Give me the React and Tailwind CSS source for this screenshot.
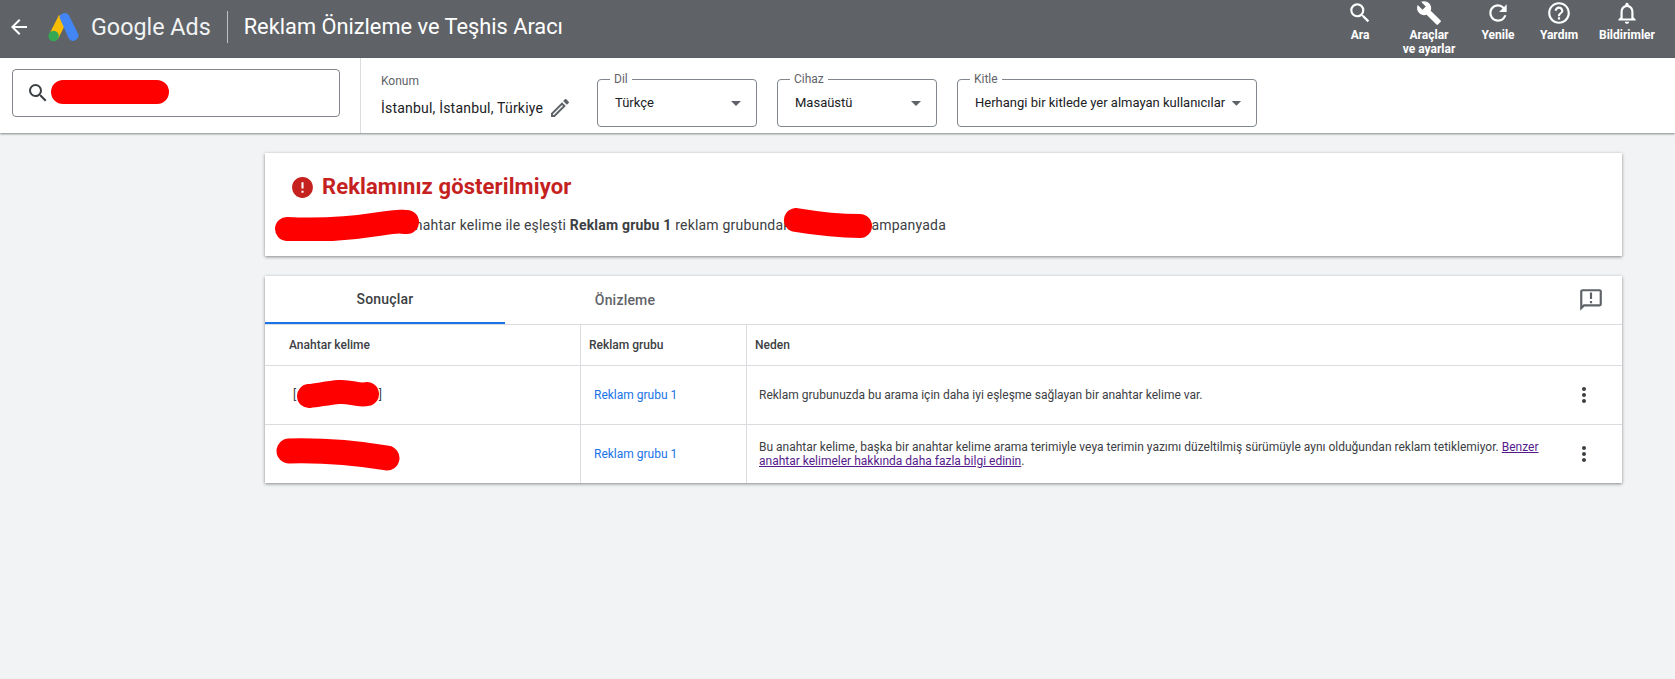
import React from "react";
import {
  MdArrowBack,
  MdArrowDropDown,
  MdBuild,
  MdError,
  MdHelpOutline,
  MdMoreVert,
  MdNotificationsNone,
  MdOutlineAnnouncement,
  MdOutlineEdit,
  MdRefresh,
  MdSearch,
} from "react-icons/md";

const Scribble = ({ className, d, width, height, stroke }) => (
  <svg
    className={className}
    width={width}
    height={height}
    viewBox={`0 0 ${width} ${height}`}
    fill="none"
  >
    <path d={d} stroke="#ff0000" strokeWidth={stroke} strokeLinecap="round" strokeLinejoin="round" />
  </svg>
);

const GoogleAdsLogo = () => (
  <svg width="31" height="30" viewBox="0 0 31 30">
    <path d="M11 3 L1.6 21.5 A 5 5 0 0 0 10.5 26 L19 9 Z" fill="#fbbc04" />
    <path d="M11.5 5.5 A 5.2 5.2 0 0 1 20.6 2.8 L30 21.5 A 5.3 5.3 0 0 1 20.6 26.3 Z" fill="#4285f4" />
    <circle cx="5.6" cy="24" r="5.2" fill="#34a853" />
  </svg>
);

const HeaderAction = ({ icon: Icon, className, children }) => (
  <div className={`flex flex-col items-center text-center text-xs leading-[14px] font-bold text-white ${className}`}>
    <Icon className="text-[26px]" />
    <div className="mt-[2px]">{children}</div>
  </div>
);

const Select = ({ label, value, className, textClass = "" }) => (
  <div className={`relative flex h-12 items-center justify-between rounded border border-[#80868b] pr-2 text-[13px] text-[#202124] ${className}`}>
    <span className="absolute -top-[8px] left-[12px] bg-white px-1 text-xs leading-[14px] text-[#5f6368]">{label}</span>
    <span className={textClass}>{value}</span>
    <MdArrowDropDown className="text-2xl text-[#5f6368]" />
  </div>
);

const Row = ({ keyword, reason }) => (
  <div className="grid h-[59px] grid-cols-[316px_166px_1fr] border-t border-[#dadce0] text-xs">
    <div className="relative flex items-center border-r border-[#dadce0]">{keyword}</div>
    <div className="flex items-center border-r border-[#dadce0] pl-[13px] text-[#1a73e8]">Reklam grubu 1</div>
    <div className="flex items-center justify-between pr-[26px] pl-3 leading-[14px] text-[#3c4043]">
      <div>{reason}</div>
      <MdMoreVert className="text-2xl text-[#3c4043]" />
    </div>
  </div>
);

const App = () => {
  return (
    <div className="min-h-[679px] bg-[#f1f3f4] font-['Roboto',sans-serif]">
      <header className="flex h-[58px] items-center justify-between bg-[#5f6368]">
        <div className="flex items-center pb-[4px] text-white">
          <MdArrowBack className="ml-[7px] text-[24px]" />
          <div className="ml-[17px]"><GoogleAdsLogo /></div>
          <span className="ml-[12px] text-[23.3px] text-[#f1f3f4]">Google Ads</span>
          <div className="mx-4 h-8 w-px bg-[#bdc1c6]" />
          <span className="text-[21.8px]">Reklam Önizleme ve Teşhis Aracı</span>
        </div>
        <div className="flex h-full items-start pr-[7px]">
          <HeaderAction icon={MdSearch} className="w-[68px]">Ara</HeaderAction>
          <HeaderAction icon={MdBuild} className="w-[70px]">Araçlar<br />ve ayarlar</HeaderAction>
          <HeaderAction icon={MdRefresh} className="w-[68px]">Yenile</HeaderAction>
          <HeaderAction icon={MdHelpOutline} className="w-[54px]">Yardım</HeaderAction>
          <HeaderAction icon={MdNotificationsNone} className="w-[82px]">Bildirimler</HeaderAction>
        </div>
      </header>

      <div className="flex h-[75px] items-center bg-white shadow-[0_1px_2px_rgba(60,64,67,0.6)]">
        <div className="flex h-full w-[361px] shrink-0 items-center border-r border-[#dadce0] pb-[5px] pl-3">
          <div className="relative flex h-12 w-[328px] items-center rounded border border-[#80868b] pl-[13px]">
            <MdSearch className="text-2xl text-[#3c4043]" />
            <Scribble className="absolute top-[9px] left-[38px]" width={118} height={26} stroke={24} d="M12 13 L106 13" />
          </div>
        </div>
        <div className="ml-[20px] w-[216px] shrink-0 text-sm">
          <div className="mb-[7px] pt-[2px] text-xs text-[#5f6368]">Konum</div>
          <div className="flex items-center tracking-[0.2px] text-[#202124]">
            İstanbul, İstanbul, Türkiye
            <MdOutlineEdit className="ml-[5px] text-2xl text-[#5f6368]" />
          </div>
        </div>
        <div className="flex gap-5 pt-[14px]">
          <Select label="Dil" value="Türkçe" className="w-[160px] pl-[17px]" />
          <Select label="Cihaz" value="Masaüstü" className="w-[160px] pl-[17px]" />
          <Select label="Kitle" value="Herhangi bir kitlede yer almayan kullanıcılar" className="w-[300px] pl-[17px]" textClass="whitespace-nowrap" />
        </div>
      </div>

      <main className="ml-[265px] w-[1357px] pt-5">
        <section className="relative h-[103px] bg-white shadow-[0_1px_3px_rgba(60,64,67,0.6)]">
          <div className="flex items-center pt-5 pl-[25px]">
            <MdError className="text-[25px] text-[#c5221f]" />
            <h1 className="ml-[7px] text-[22px] leading-7 font-bold tracking-[0.1px] text-[#c5221f]">Reklamınız gösterilmiyor</h1>
          </div>
          <p className="mt-[14px] pl-[142px] text-sm leading-5 tracking-[0.2px] text-[#3c4043]">
            anahtar kelime ile eşleşti <b className="font-bold">Reklam grubu 1</b> reklam grubundaki
            <span className="inline-block w-[70px]" />
            kampanyada
          </p>
          <Scribble className="absolute top-[56px] left-[9px]" width={146} height={32} stroke={24} d="M13 20 C 50 22, 80 19, 105 15 S 125 13, 133 13" />
          <Scribble className="absolute top-[55px] left-[519px]" width={88} height={30} stroke={24} d="M12 12 C 30 15, 55 18, 76 18" />
        </section>

        <section className="mt-5 bg-white shadow-[0_1px_3px_rgba(60,64,67,0.6)]">
          <div className="flex h-12 items-center justify-between text-sm tracking-[0.2px]">
            <div className="flex h-full">
              <div className="flex w-[240px] items-center justify-center border-b-2 border-[#1a73e8] font-medium text-[#3c4043]">Sonuçlar</div>
              <div className="flex w-[240px] items-center justify-center font-medium text-[#5f6368]">Önizleme</div>
            </div>
            <MdOutlineAnnouncement className="mr-[18px] text-[26px] text-[#5f6368]" />
          </div>
          <div className="grid h-[41px] grid-cols-[316px_166px_1fr] border-t border-[#dadce0] text-xs font-medium text-[#3c4043]">
            <div className="flex items-center border-r border-[#dadce0] pl-6">Anahtar kelime</div>
            <div className="flex items-center border-r border-[#dadce0] pl-2">Reklam grubu</div>
            <div className="flex items-center pl-2">Neden</div>
          </div>
          <Row
            keyword={
              <>
                <span className="ml-[28px] w-[89px] text-[#3c4043]">[<span className="float-right">]</span></span>
                <Scribble className="absolute top-[9px] left-[32px]" width={84} height={40} stroke={24} d="M12 21 C 22 20, 30 18, 42 17 S 60 21, 70 19" />
              </>
            }
            reason="Reklam grubunuzda bu arama için daha iyi eşleşme sağlayan bir anahtar kelime var."
          />
          <Row
            keyword={
              <Scribble className="absolute top-[13px] left-[11px]" width={124} height={34} stroke={25} d="M13 13 C 50 12, 80 15, 111 20" />
            }
            reason={
              <>
                Bu anahtar kelime, başka bir anahtar kelime arama terimiyle veya terimin yazımı düzeltilmiş sürümüyle aynı olduğundan reklam tetiklemiyor.{" "}
                <span className="text-[#551a8b] underline">Benzer<br />anahtar kelimeler hakkında daha fazla bilgi edinin</span>.
              </>
            }
          />
        </section>
      </main>
    </div>
  );
};

export default App;
